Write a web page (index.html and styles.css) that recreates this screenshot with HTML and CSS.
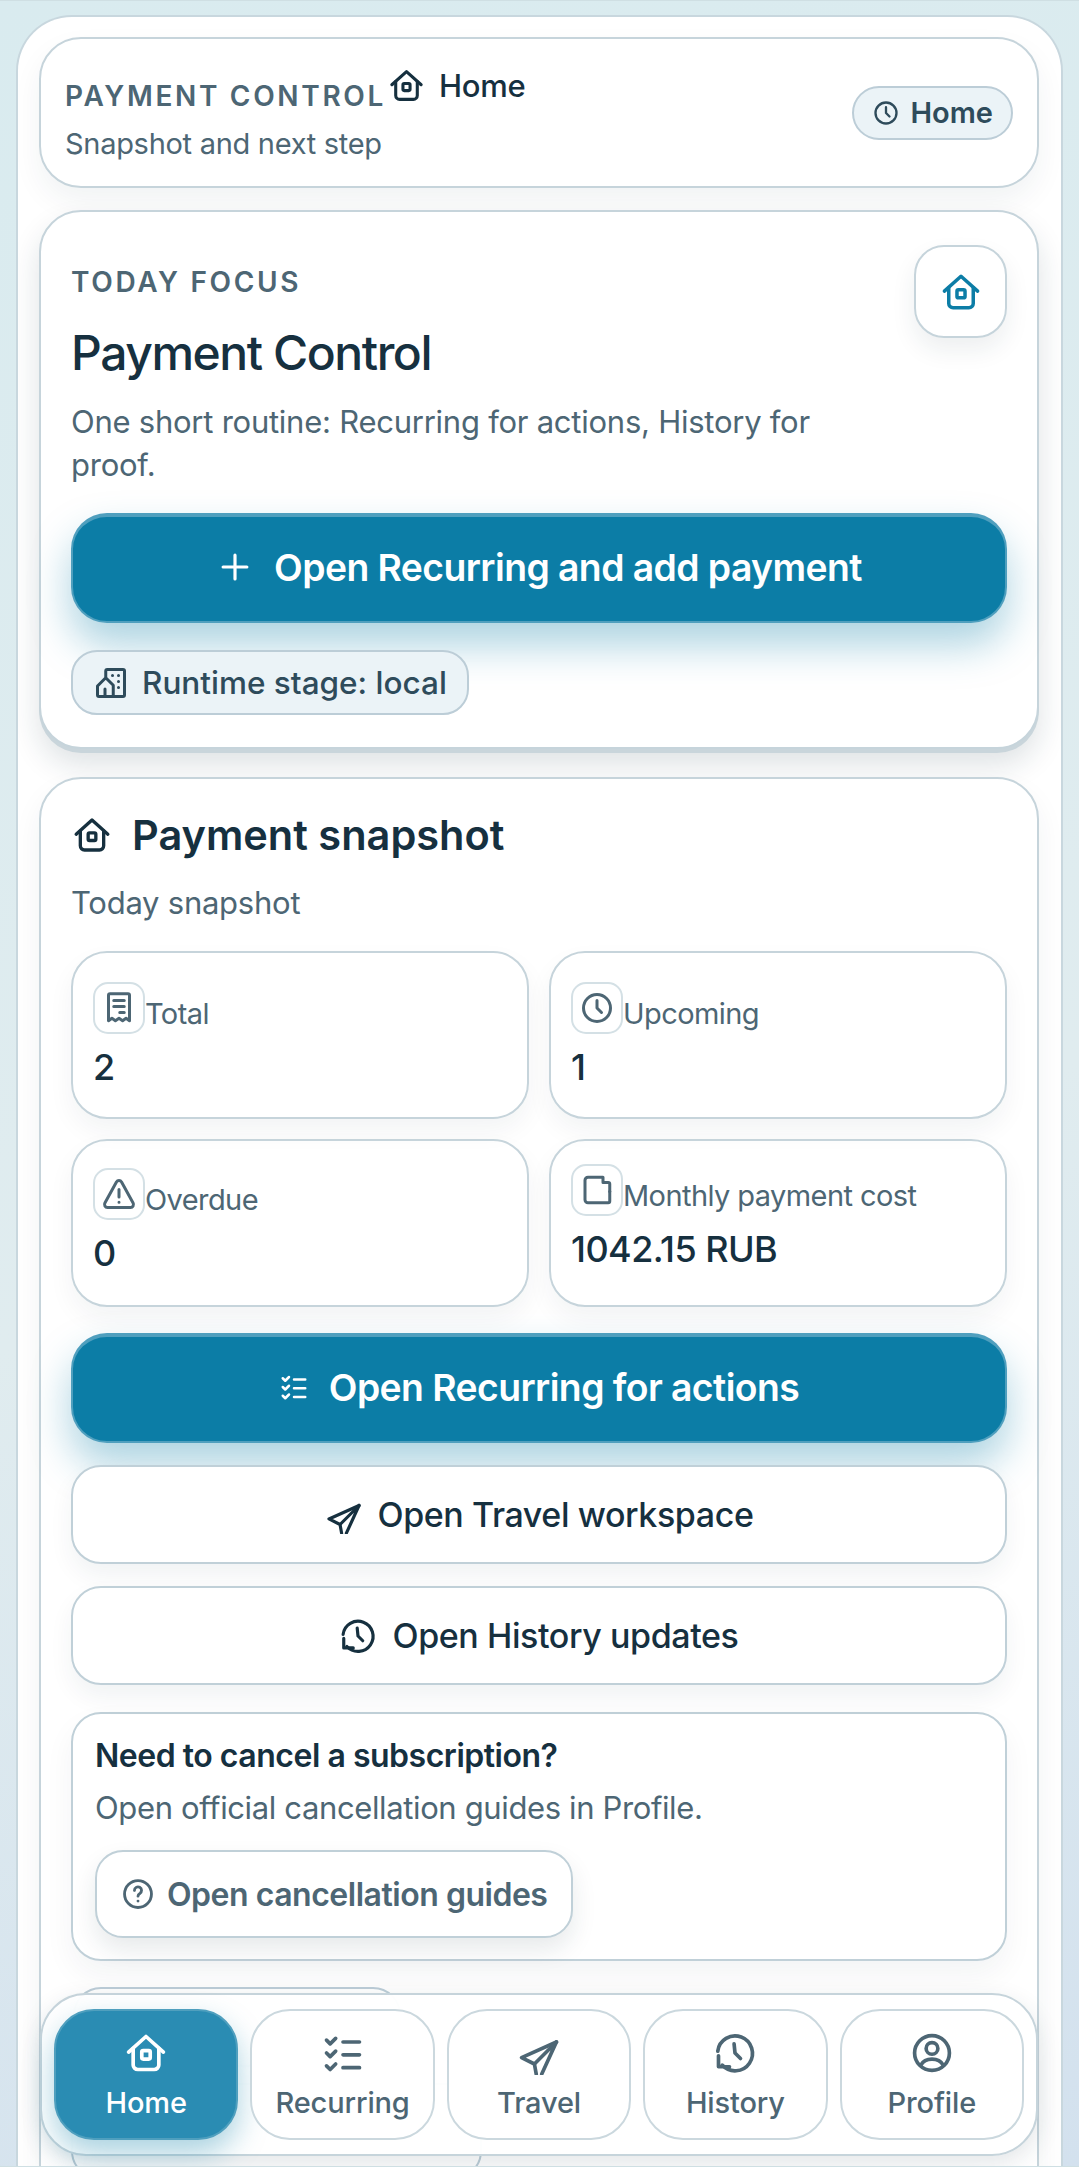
FILE: index.html
```html
<!DOCTYPE html>
<html lang="en">
<head>
    <meta charset="UTF-8">
    <meta name="viewport" content="width=device-width, initial-scale=1.0">
    <title>Payment Control</title>
    <link rel="stylesheet" href="styles.css">
</head>
<body>
    <svg class="sprite" width="0" height="0">
        <symbol id="i-home" viewBox="0 0 24 24"><path d="M2.5 11.5 12 3l9.5 8.5"/><path d="M5 9.5v9A2.500 2.500 0 0 0 7.500 21h9a2.500 2.500 0 0 0 2.500-2.500v-9"/><rect x="9.700" y="10.700" width="4.600" height="4.600" rx=".8"/></symbol>
        <symbol id="i-clock" viewBox="0 0 24 24"><circle cx="12" cy="12" r="9"/><path d="M12 7v5l3 3"/></symbol>
        <symbol id="i-plus" viewBox="0 0 24 24"><path d="M12 4.500v15M4.500 12h15"/></symbol>
        <symbol id="i-building" viewBox="0 0 24 24"><path d="M8.500 8V4a1 1 0 0 1 1-1H20a1 1 0 0 1 1 1v16a1 1 0 0 1-1 1H4a1 1 0 0 1-1-1v-6l5.500-5.500 5 5V21"/><path d="M8 21v-5"/><path d="M13 7h.01M17 7h.01M17 11h.01M17 15h.01"/></symbol>
        <symbol id="i-list" viewBox="0 0 24 24"><path d="m3 5 2 2 3-3M3 12l2 2 3-3M3 19l2 2 3-3"/><path d="M12 6h9M12 13h9M12 20h9"/></symbol>
        <symbol id="i-plane" viewBox="0 -3 24 24"><path d="M21.500 3 2.500 11.500l7 3.500 1 5.500"/><path d="M21.500 3 13.500 20.500M21.500 3 9.500 15"/></symbol>
        <symbol id="i-history" viewBox="0 0 24 24"><path d="M2.600 11a9.500 9.500 0 1 1 2.400 7.600"/><path d="M3 13.500V19.500H9"/><path d="M11.500 7l.5 5 3 3"/></symbol>
        <symbol id="i-profile" viewBox="0 0 24 24"><circle cx="12" cy="12" r="9.500"/><circle cx="12" cy="9.500" r="3.200"/><path d="M6 18.500c1.200-2.400 3.500-3.200 6-3.200s4.800.8 6 3.200"/></symbol>
        <symbol id="i-help" viewBox="0 0 24 24"><circle cx="12" cy="12" r="9.500"/><path d="M9.500 9.500a2.500 2.500 0 1 1 3.800 2.100c-.9.500-1.300 1-1.300 1.900"/><path d="M12 17h.01"/></symbol>
        <symbol id="i-receipt" viewBox="0 0 24 24"><path d="M6 2.500h12a1 1 0 0 1 1 1v17l-2.300-1.600-2.300 1.600-2.400-1.600-2.400 1.600-2.300-1.600L5 20.500v-17a1 1 0 0 1 1-1z"/><path d="M8.500 7h7M8.500 11h7M12.500 15h3"/></symbol>
        <symbol id="i-alert" viewBox="0 0 24 24"><path d="M10.300 4 2.600 18a2 2 0 0 0 1.700 3h15.400a2 2 0 0 0 1.700-3L13.700 4a2 2 0 0 0-3.400 0z"/><path d="M12 9v5M12 17.500h.01"/></symbol>
        <symbol id="i-wallet" viewBox="0 0 24 24"><path d="M6 3.500h10V7h3.500a1 1 0 0 1 1 1v11.500a1 1 0 0 1-1 1H6a2 2 0 0 1-2-2v-13a2 2 0 0 1 2-2z"/><path d="M20.500 13h-.01"/></symbol>
    </svg>

    <div class="shell">
        <header class="card topbar">
            <div class="topbar-text">
                <div class="topbar-title">
                    <span class="eyebrow">PAYMENT CONTROL</span>
                    <svg class="icon icon-top"><use href="#i-home"/></svg>
                    <span class="topbar-route">Home</span>
                </div>
                <p class="muted topbar-sub">Snapshot and next step</p>
            </div>
            <span class="pill pill-small"><svg class="icon icon-pill"><use href="#i-clock"/></svg>Home</span>
        </header>

        <section class="card focus">
            <div class="focus-head">
                <div>
                    <div class="eyebrow eyebrow-focus">TODAY FOCUS</div>
                    <h1 class="focus-title">Payment Control</h1>
                </div>
                <span class="icon-box"><svg class="icon icon-focus"><use href="#i-home"/></svg></span>
            </div>
            <p class="muted focus-text">One short routine: Recurring for actions, History for proof.</p>
            <a class="btn btn-primary"><svg class="icon icon-btn"><use href="#i-plus"/></svg>Open Recurring and add payment</a>
            <span class="pill pill-stage"><svg class="icon icon-stage"><use href="#i-building"/></svg>Runtime stage: local</span>
        </section>

        <section class="card snapshot">
            <h2 class="snapshot-title"><svg class="icon icon-heading"><use href="#i-home"/></svg>Payment snapshot</h2>
            <p class="muted snapshot-sub">Today snapshot</p>
            <div class="stats">
                <div class="stat">
                    <div class="stat-label"><span class="stat-icon"><svg class="icon icon-stat"><use href="#i-receipt"/></svg></span>Total</div>
                    <div class="stat-value">2</div>
                </div>
                <div class="stat">
                    <div class="stat-label"><span class="stat-icon"><svg class="icon icon-stat"><use href="#i-clock"/></svg></span>Upcoming</div>
                    <div class="stat-value">1</div>
                </div>
                <div class="stat stat-lower">
                    <div class="stat-label"><span class="stat-icon"><svg class="icon icon-stat"><use href="#i-alert"/></svg></span>Overdue</div>
                    <div class="stat-value">0</div>
                </div>
                <div class="stat stat-wide">
                    <div class="stat-label"><span class="stat-icon"><svg class="icon icon-stat"><use href="#i-wallet"/></svg></span>Monthly payment cost</div>
                    <div class="stat-value">1042.15 RUB</div>
                </div>
            </div>
            <div class="actions">
                <a class="btn btn-primary btn-recurring"><svg class="icon icon-list"><use href="#i-list"/></svg>Open Recurring for actions</a>
                <a class="btn btn-plain"><svg class="icon icon-plain"><use href="#i-plane"/></svg>Open Travel workspace</a>
                <a class="btn btn-plain"><svg class="icon icon-plain"><use href="#i-history"/></svg>Open History updates</a>
            </div>
            <div class="cancel">
                <div class="cancel-title">Need to cancel a subscription?</div>
                <p class="muted cancel-text">Open official cancellation guides in Profile.</p>
                <a class="guide-link"><svg class="icon icon-help"><use href="#i-help"/></svg>Open cancellation guides</a>
            </div>
            <div class="behind behind-short"></div>
            <div class="behind behind-long"></div>
        </section>
    </div>

    <nav class="tabbar">
        <a class="tab active"><svg class="icon icon-tab"><use href="#i-home"/></svg>Home</a>
        <a class="tab"><svg class="icon icon-tab"><use href="#i-list"/></svg>Recurring</a>
        <a class="tab"><svg class="icon icon-tab"><use href="#i-plane"/></svg>Travel</a>
        <a class="tab"><svg class="icon icon-tab"><use href="#i-history"/></svg>History</a>
        <a class="tab"><svg class="icon icon-tab"><use href="#i-profile"/></svg>Profile</a>
    </nav>
</body>
</html>
```

FILE: styles.css
```css
* {
    margin: 0;
    padding: 0;
    box-sizing: border-box;
}

html, body {
    height: 2167px;
    overflow: hidden;
}

body {
    position: relative;
    font-family: 'Inter', 'Noto Sans', sans-serif;
    color: #16303f;
    background: linear-gradient(165deg, #d9ebef 0%, #e0ecef 55%, #d3e1ee 100%);
    border-top: 1px solid #cfdfe3;
    border-bottom: 1px solid #cfdfe3;
}

.sprite {
    position: absolute;
}

.icon {
    fill: none;
    stroke: currentColor;
    stroke-width: 2;
    stroke-linecap: round;
    stroke-linejoin: round;
    flex: none;
}

.shell {
    margin: 14px 16px 0;
    padding: 20px 22px 0 21px;
    height: 2160px;
    overflow: hidden;
    background: #fff;
    border: 2px solid #c8d7de;
    border-bottom: none;
    border-radius: 56px 56px 0 0;
}

.card {
    background: #fff;
    border: 2px solid #c6d4db;
    border-radius: 42px;
    box-shadow: 0 14px 30px rgba(22, 48, 63, 0.06);
}

.muted {
    color: #4d6674;
}

.eyebrow {
    color: #4d6674;
    font-size: 28px;
    font-weight: 600;
    letter-spacing: 0.095em;
}

/* top bar */
.topbar {
    display: flex;
    justify-content: space-between;
    align-items: center;
    height: 151px;
    padding: 0 24px;
}

.topbar-title {
    display: flex;
    align-items: flex-start;
    height: 44px;
}

.topbar-title .eyebrow {
    margin-top: 15px;
    line-height: 40px;
}

.icon-top {
    width: 37px;
    height: 37px;
    margin: 6px 0 0 2px;
}

.topbar-route {
    margin-left: 14px;
    margin-top: 6px;
    font-size: 31px;
    font-weight: 500;
    line-height: 38px;
    letter-spacing: -0.01em;
}

.topbar-sub {
    margin-top: 19px;
    font-size: 29px;
    line-height: 40px;
    letter-spacing: -0.01em;
}

.pill {
    display: inline-flex;
    align-items: center;
    color: #2e4b5b;
    background: #ebf3f7;
    border: 2px solid #bccdd7;
    font-weight: 600;
}

.pill-small {
    gap: 10px;
    height: 54px;
    padding: 0 18px;
    border-radius: 27px;
    font-size: 29px;
}

.icon-pill {
    width: 28px;
    height: 28px;
}

/* today focus */
.focus {
    height: 539px;
    margin-top: 22px;
    padding: 33px 30px 0;
    box-shadow: 0 4px 0 #c9d5db, 0 16px 30px rgba(22, 48, 63, 0.14);
}

.focus-head {
    display: flex;
    justify-content: space-between;
    align-items: flex-start;
}

.eyebrow-focus {
    margin-top: 19px;
    line-height: 36px;
}

.focus-title {
    margin-top: 23px;
    font-size: 48px;
    font-weight: 500;
    line-height: 60px;
    letter-spacing: -0.03em;
}

.icon-box {
    display: flex;
    justify-content: center;
    align-items: center;
    width: 93px;
    height: 93px;
    color: #0c7da6;
    border: 2px solid #c6d4db;
    border-radius: 30px;
    box-shadow: 0 12px 24px rgba(22, 48, 63, 0.08);
}

.icon-focus {
    width: 42px;
    height: 42px;
}

.focus-text {
    width: 780px;
    margin-top: 17px;
    font-size: 31px;
    line-height: 43px;
    letter-spacing: -0.008em;
}

.btn {
    display: flex;
    justify-content: center;
    align-items: center;
    font-weight: 600;
}

.btn-primary {
    gap: 20px;
    height: 110px;
    margin-top: 27px;
    padding-bottom: 4px;
    color: #fff;
    background: #0c7da6;
    border: 2px solid #4f9fbe;
    border-top-width: 4px;
    border-radius: 36px;
    font-size: 37.3px;
    letter-spacing: -0.015em;
    box-shadow: 0 22px 40px rgba(12, 125, 166, 0.34);
}

.icon-btn {
    width: 38px;
    height: 38px;
}

.pill-stage {
    gap: 13px;
    height: 65px;
    margin-top: 27px;
    padding: 0 20px;
    border-radius: 26px;
    font-size: 31.5px;
    font-weight: 500;
}

.icon-stage {
    width: 36px;
    height: 36px;
}

/* snapshot */
.snapshot {
    height: 1500px;
    margin-top: 28px;
    padding: 0 30px;
}

.snapshot-title {
    display: flex;
    align-items: center;
    gap: 20px;
    height: 56px;
    margin-top: 28px;
    font-size: 41.5px;
    font-weight: 600;
}

.icon-heading {
    width: 40px;
    height: 40px;
    margin-left: 1px;
}

.snapshot-sub {
    margin-top: 20px;
    font-size: 31px;
    line-height: 40px;
    letter-spacing: -0.008em;
}

.stats {
    display: grid;
    grid-template-columns: 1fr 1fr;
    gap: 20px;
    margin-top: 28px;
}

.stat {
    height: 168px;
    padding: 29px 20px 0;
    border: 2px solid #c6d4db;
    border-radius: 36px;
    box-shadow: 0 12px 26px rgba(22, 48, 63, 0.05);
}

.stat-lower {
    padding-top: 27px;
}

.stat-wide {
    padding-top: 23px;
}

.stat-label {
    display: flex;
    align-items: flex-end;
    height: 52px;
    color: #4d6674;
    font-size: 29px;
    line-height: 40px;
    letter-spacing: -0.02em;
}

.stat-icon {
    display: flex;
    justify-content: center;
    align-items: flex-start;
    width: 52px;
    height: 52px;
    padding-top: 6px;
    border: 2px solid #d4e0e5;
    border-radius: 15px;
}

.icon-stat {
    width: 36px;
    height: 36px;
}

.stat-value {
    margin-top: 10px;
    font-size: 36px;
    font-weight: 500;
    line-height: 46px;
    letter-spacing: -0.015em;
}

.actions {
    display: flex;
    flex-direction: column;
    gap: 22px;
    margin-top: 26px;
}

.btn-recurring {
    gap: 20px;
    margin-top: 0;
}

.icon-list {
    width: 30px;
    height: 30px;
}

.btn-plain {
    gap: 15px;
    height: 99px;
    background: #fff;
    border: 2px solid #c0d0d8;
    border-radius: 30px;
    font-size: 34px;
    font-weight: 500;
    letter-spacing: -0.012em;
    box-shadow: 0 12px 24px rgba(22, 48, 63, 0.06);
}

.icon-plain {
    width: 38px;
    height: 38px;
}

.cancel {
    height: 249px;
    margin-top: 27px;
    padding: 22px 22px 0;
    border: 2px solid #c0d0d8;
    border-radius: 30px;
    box-shadow: 0 14px 30px rgba(22, 48, 63, 0.05);
}

.cancel-title {
    font-size: 32px;
    font-weight: 600;
    line-height: 40px;
    letter-spacing: -0.015em;
}

.cancel-text {
    margin-top: 12px;
    font-size: 31px;
    line-height: 40px;
    letter-spacing: -0.012em;
}

.guide-link {
    display: inline-flex;
    align-items: center;
    gap: 12px;
    height: 88px;
    margin-top: 22px;
    padding: 0 24px;
    color: #4d6674;
    background: #fff;
    border: 2px solid #c0d0d8;
    border-radius: 28px;
    font-size: 32px;
    font-weight: 600;
    letter-spacing: -0.015em;
    box-shadow: 0 12px 24px rgba(22, 48, 63, 0.1);
}

.icon-help {
    width: 34px;
    height: 34px;
}

.behind {
    border: 2px solid #bccdd7;
    border-radius: 28px;
}

.behind-short {
    width: 328px;
    height: 80px;
    margin-top: 26px;
    margin-left: 2px;
}

.behind-long {
    width: 411px;
    height: 96px;
    margin-top: 16px;
}

/* bottom navigation, sits over the page */
.tabbar {
    position: absolute;
    left: 40px;
    top: 1992px;
    display: grid;
    grid-template-columns: repeat(5, 1fr);
    gap: 12px;
    width: 998px;
    height: 163px;
    padding: 14px 12px;
    background: rgba(255, 255, 255, 0.97);
    border: 2px solid #c6d4db;
    border-radius: 46px;
    box-shadow: 0 8px 24px rgba(22, 48, 63, 0.12);
}

.tab {
    display: flex;
    flex-direction: column;
    align-items: center;
    gap: 10px;
    padding-top: 20px;
    color: #4d6674;
    background: #fff;
    border: 2px solid #cbd8de;
    border-radius: 40px;
    font-size: 29px;
    font-weight: 500;
    letter-spacing: -0.005em;
}

.tab.active {
    color: #fff;
    background: #2a8cb3;
    border-color: #4f9fbe;
    box-shadow: 0 14px 30px rgba(12, 125, 166, 0.35);
}

.icon-tab {
    width: 44px;
    height: 44px;
}
```
